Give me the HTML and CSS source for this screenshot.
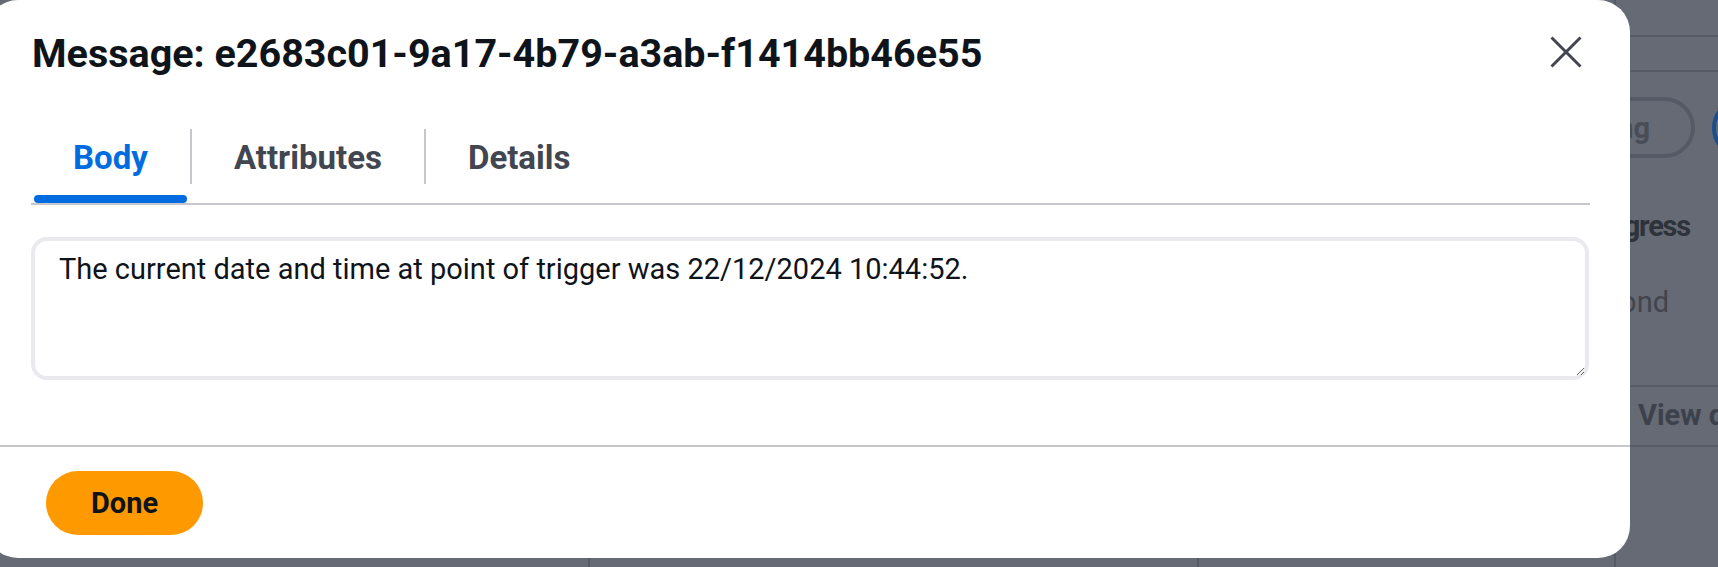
FILE: index.html
```html
<!DOCTYPE html>
<html lang="en">
<head>
<meta charset="utf-8">
<title>Message</title>
<link rel="stylesheet" href="styles.css">
</head>
<body>
<div class="page">
  <div class="col col-a"></div>
  <div class="col col-b"></div>
  <div class="col col-c"></div>
  <aside class="side">
    <div class="side-top"></div>
    <div class="side-sub"></div>
    <div class="side-actions">
      <span class="pill">Start polling</span>
      <span class="round"></span>
    </div>
    <div class="side-status"><span>In progress</span></div>
    <div class="side-note"><span>Polling every 1 second</span></div>
    <div class="side-link">View details</div>
  </aside>
</div>

<div class="modal" role="dialog" aria-modal="true">
  <header class="modal-header">
    <h2 class="modal-title">Message: e2683c01-9a17-4b79-a3ab-f1414bb46e55</h2>
    <button class="close" aria-label="Close">
      <svg width="32" height="32" viewBox="0 0 32 32" aria-hidden="true">
        <path d="M1.5 1.5 30.5 30.5M30.5 1.5 1.5 30.5" fill="none" stroke="#424650" stroke-width="3"/>
      </svg>
    </button>
  </header>
  <nav class="tabs">
    <div class="tab active">Body</div>
    <span class="sep"></span>
    <div class="tab">Attributes</div>
    <span class="sep"></span>
    <div class="tab">Details</div>
  </nav>
  <div class="modal-body">
    <textarea class="msg" readonly>The current date and time at point of trigger was 22/12/2024 10:44:52.</textarea>
  </div>
  <footer class="modal-footer">
    <button class="done">Done</button>
  </footer>
</div>
</body>
</html>
```
FILE: styles.css
```css
* { box-sizing: border-box; }

html, body {
  margin: 0;
  padding: 0;
}

body {
  width: 1718px;
  height: 567px;
  overflow: hidden;
  background: #656a74;
  font-family: Roboto, "Liberation Sans", sans-serif;
  position: relative;
}

/* dimmed page behind the modal */
.page {
  display: flex;
  height: 567px;
  width: 1718px;
  overflow: hidden;
}

.col {
  flex: none;
  height: 100%;
  border-right: 2px solid #555a64;
}
.col-a { width: 590px; }
.col-b { width: 609px; }
.col-c { width: 417px; }

.side {
  width: 102px;
  flex: none;
  display: flex;
  flex-direction: column;
}

.side-top {
  height: 37px;
  border-bottom: 2px solid #575b66;
}
.side-sub {
  height: 35px;
  border-bottom: 2px solid #575b66;
}

.side-actions {
  display: flex;
  align-items: center;
  gap: 17px;
  margin-top: 25px;
  margin-left: -171px;
}

.pill {
  width: 250px;
  height: 61px;
  flex: none;
  border: 4px solid #555a66;
  border-radius: 31px;
  display: flex;
  justify-content: flex-end;
  align-items: center;
  white-space: nowrap;
  padding-right: 41px;
  font-weight: 700;
  font-size: 29px;
  color: #494d57;
}

.round {
  width: 60px;
  height: 60px;
  flex: none;
  border: 4px solid #1d4d8b;
  border-radius: 50%;
}

.side-status {
  width: 74px;
  display: flex;
  justify-content: flex-end;
  white-space: nowrap;
  margin-top: 48px;
  font-weight: 700;
  font-size: 29px;
  letter-spacing: -1.2px;
  line-height: 40px;
  color: #2e323b;
}

.side-note {
  width: 53px;
  display: flex;
  justify-content: flex-end;
  white-space: nowrap;
  margin-top: 36px;
  font-size: 29px;
  line-height: 40px;
  color: #41454e;
}

.side-link {
  margin-top: 63px;
  border-top: 2px solid #575b66;
  border-bottom: 2px solid #575b66;
  padding: 8px 0 10px 22px;
  white-space: nowrap;
  font-weight: 700;
  font-size: 29px;
  line-height: 40px;
  color: #3d414b;
}

/* modal */
.modal {
  position: absolute;
  left: -14px;
  top: 0;
  width: 1644px;
  background: #ffffff;
  border-radius: 32px;
  display: flex;
  flex-direction: column;
}

.modal-header {
  display: flex;
  justify-content: space-between;
  align-items: flex-start;
  padding: 30px 48px 0 46px;
}

.modal-title {
  margin: 0;
  font-size: 39.5px;
  line-height: 48px;
  font-weight: 700;
  color: #0f141a;
}

.close {
  margin-top: 6px;
  width: 32px;
  height: 32px;
  padding: 0;
  border: 0;
  background: none;
  display: block;
}
.close svg { display: block; }

.tabs {
  display: flex;
  align-items: flex-start;
  margin: 43px 40px 0 45px;
  border-bottom: 2px solid #c6c6cd;
}

.tab {
  position: relative;
  padding: 17px 42px 25px;
  font-size: 33px;
  line-height: 40px;
  font-weight: 700;
  color: #424650;
}

.tab.active { color: #006ce0; }

.tab.active::after {
  content: "";
  position: absolute;
  left: 3px;
  right: 3px;
  bottom: 0;
  height: 8px;
  border-radius: 4px;
  background: #006ce0;
}

.sep {
  width: 2px;
  height: 55px;
  margin-top: 8px;
  background: #c6c6cd;
  flex: none;
}

.modal-body {
  padding: 32px 41px 0 45px;
}

.msg {
  display: block;
  width: 100%;
  height: 143px;
  margin: 0;
  border: 4px solid #e9e9ee;
  border-radius: 16px;
  padding: 8px 24px;
  font-family: Roboto, "Liberation Sans", sans-serif;
  font-size: 29px;
  line-height: 40px;
  color: #0f141a;
  background: #ffffff;
  outline: none;
}

.modal-footer {
  margin-top: 65px;
  border-top: 2px solid #c6c6cd;
  padding: 24px 0 23px 60px;
}

.done {
  display: block;
  height: 64px;
  width: 157px;
  padding: 0;
  border: 0;
  border-radius: 32px;
  background: #ff9900;
  font-family: Roboto, "Liberation Sans", sans-serif;
  font-size: 29px;
  font-weight: 700;
  color: #0f141a;
}
```
